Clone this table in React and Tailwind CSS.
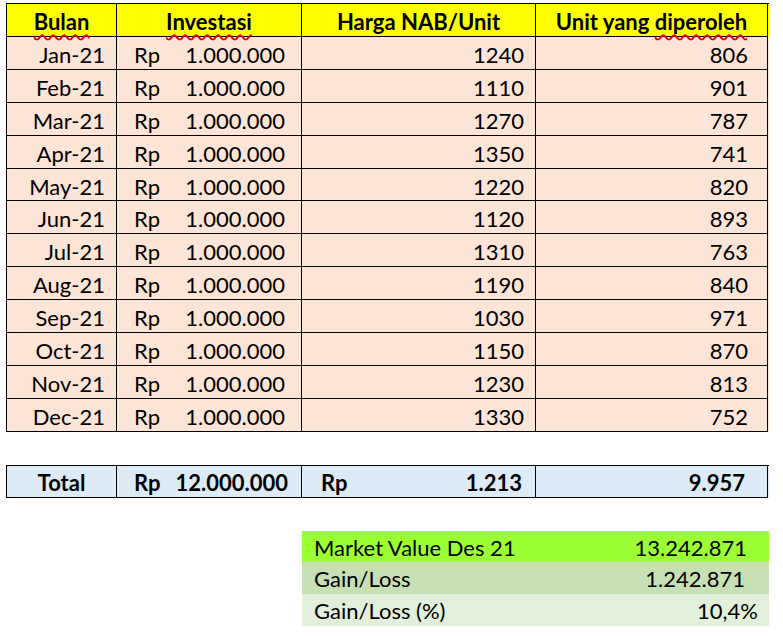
import React from 'react'

const rows = [
  ['Jan-21', 1240, 806],
  ['Feb-21', 1110, 901],
  ['Mar-21', 1270, 787],
  ['Apr-21', 1350, 741],
  ['May-21', 1220, 820],
  ['Jun-21', 1120, 893],
  ['Jul-21', 1310, 763],
  ['Aug-21', 1190, 840],
  ['Sep-21', 1030, 971],
  ['Oct-21', 1150, 870],
  ['Nov-21', 1230, 813],
  ['Dec-21', 1330, 752],
]

const cols = 'grid grid-cols-[110px_185px_234px_232px]'
const spell = 'underline decoration-wavy decoration-[#e00000] decoration-[1.5px] underline-offset-[4px]'

export default function App(){
  return (
    <div className="w-[783px] h-[637px] bg-white text-black text-[22px] leading-none" style={{ fontFamily: 'Lato, "Open Sans", sans-serif' }}>
      <div className="pt-[3px] pl-[6px]">
        <div className="w-[763px] border-t border-l border-black">
          <div className={`${cols} h-[33px] bg-[#ffff00] font-bold`}>
            <div className="border-r border-b border-black flex items-center justify-center pt-[3px]"><span className={spell}>Bulan</span></div>
            <div className="border-r border-b border-black flex items-center justify-center pt-[3px]"><span className={spell}>Investasi</span></div>
            <div className="border-r border-b border-black flex items-center justify-center pt-[3px]">Harga NAB/Unit</div>
            <div className="border-r border-b border-black flex items-center justify-center pt-[3px]">Unit yang&nbsp;<span className={spell}>diperoleh</span></div>
          </div>
          {rows.map(([m, nab, unit]) => (
            <div key={m} className={`${cols} h-[32.9px] bg-[#fce4d6]`}>
              <div className="border-r border-b border-black flex items-center justify-end pr-[11px] pt-[4px]">{m}</div>
              <div className="border-r border-b border-black flex items-center justify-between pl-[17px] pr-[16px] pt-[4px]"><span>Rp</span><span>1.000.000</span></div>
              <div className="border-r border-b border-black flex items-center justify-end pr-[11px] pt-[4px]">{nab}</div>
              <div className="border-r border-b border-black flex items-center justify-end pr-[19px] pt-[4px]">{unit}</div>
            </div>
          ))}
        </div>

        <div className={`${cols} w-[763px] h-[33px] mt-[33px] bg-[#ddebf7] border-t border-l border-black font-bold`}>
          <div className="border-r border-b border-black flex items-center justify-center pt-[4px]">Total</div>
          <div className="border-r border-b border-black flex items-center justify-between pl-[17px] pr-[13px] pt-[4px]"><span>Rp</span><span>12.000.000</span></div>
          <div className="border-r border-b border-black flex items-center justify-between pl-[19px] pr-[13px] pt-[4px]"><span>Rp</span><span>1.213</span></div>
          <div className="border-r border-b border-black flex items-center justify-end pr-[22px] pt-[4px]">9.957</div>
        </div>

        <div className="ml-[296px] mt-[33px] w-[467px]">
          <div className="h-[31px] bg-[#9cff33] flex items-center justify-between pl-[12px] pr-[22px] pt-[3px]"><span>Market Value Des 21</span><span>13.242.871</span></div>
          <div className="h-[32px] bg-[#c6e0b4] flex items-center justify-between pl-[12px] pr-[24px] pt-[3px]"><span>Gain/Loss</span><span>1.242.871</span></div>
          <div className="h-[32px] bg-[#e2efda] flex items-center justify-between pl-[12px] pr-[11px] pt-[3px]"><span>Gain/Loss (%)</span><span>10,4%</span></div>
        </div>
      </div>
    </div>
  )
}
